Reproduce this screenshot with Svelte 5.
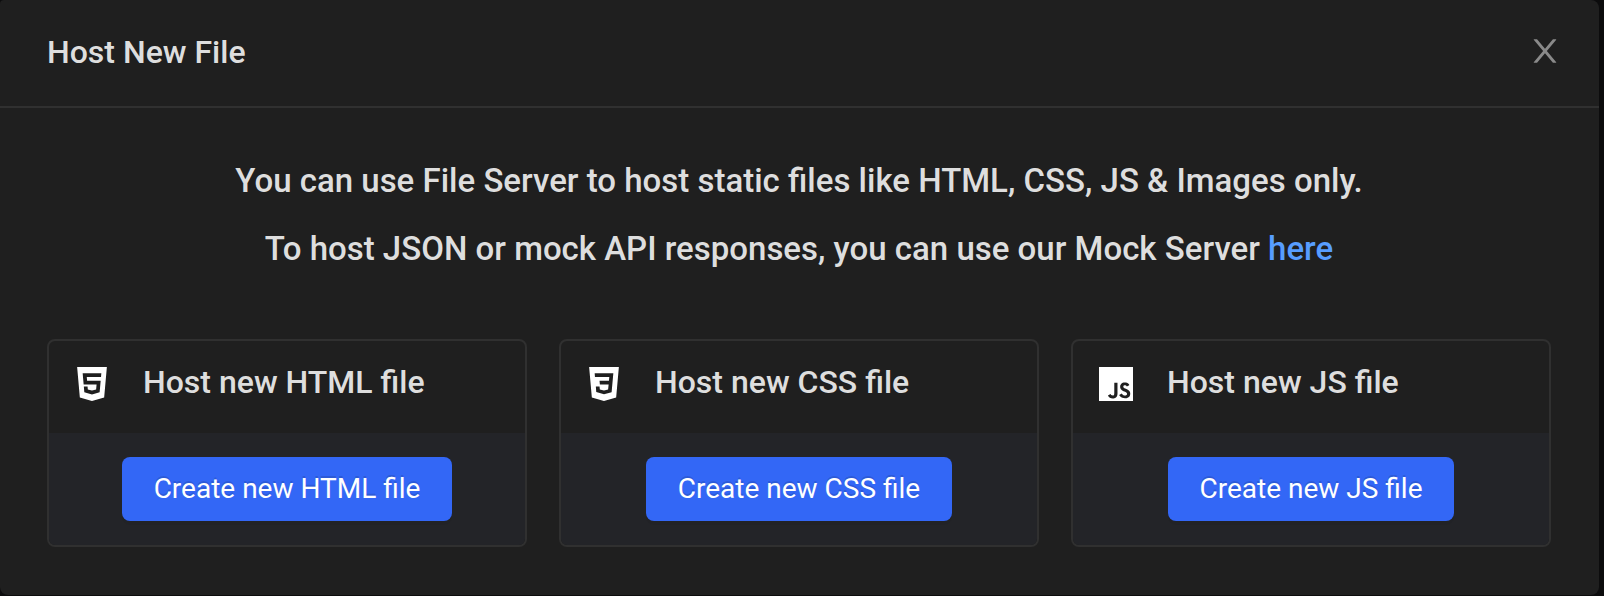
<script>
  const cards = [
    {
      type: 'HTML',
      icon: 'M1.5 0h21l-1.91 21.563L11.977 24l-8.564-2.438L1.5 0zm7.031 9.75l-.232-2.718 10.059.003.23-2.622L5.412 4.41l.698 8.01h9.126l-.326 3.426-2.91.804-2.955-.81-.188-2.11H6.248l.33 4.171L12 19.351l5.379-1.443.744-8.157H8.531z'
    },
    {
      type: 'CSS',
      icon: 'M1.5 0h21l-1.91 21.563L11.977 24l-8.565-2.438L1.5 0zm17.09 4.413L5.41 4.41l.213 2.622 10.125.002-.255 2.716h-6.64l.24 2.573h6.182l-.366 3.523-2.91.804-2.956-.81-.188-2.11h-2.61l.29 3.855L12 19.288l5.373-1.53L18.59 4.414z'
    },
    {
      type: 'JS',
      icon: 'M0 0h24v24H0V0zm22.034 18.276c-.175-1.095-.888-2.015-3.003-2.873-.736-.345-1.554-.585-1.797-1.14-.091-.33-.105-.51-.046-.705.15-.646.915-.84 1.515-.66.39.12.75.42.976.9 1.034-.676 1.034-.676 1.755-1.125-.27-.42-.404-.601-.586-.78-.63-.705-1.469-1.065-2.834-1.034l-.705.089c-.676.165-1.32.525-1.71 1.005-1.14 1.291-.811 3.541.569 4.471 1.365 1.02 3.361 1.244 3.616 2.205.24 1.17-.87 1.545-1.966 1.41-.811-.18-1.26-.586-1.755-1.336l-1.83 1.051c.21.48.45.689.81 1.109 1.74 1.756 6.09 1.666 6.871-1.004.029-.09.24-.705.074-1.65l.046.067zm-8.983-7.245h-2.248c0 1.938-.009 3.864-.009 5.805 0 1.232.063 2.363-.138 2.711-.33.689-1.18.601-1.566.48-.396-.196-.597-.466-.83-.855-.063-.105-.11-.196-.127-.196l-1.825 1.125c.305.63.75 1.172 1.324 1.517.855.51 2.004.675 3.207.405.783-.226 1.458-.691 1.811-1.411.51-.93.402-2.07.397-3.346.012-2.054 0-4.109 0-6.179l.004-.056z'
    }
  ];
</script>

<div class="modal" role="dialog" aria-labelledby="modal-title">
  <header class="modal-header">
    <h1 id="modal-title">Host New File</h1>
    <button class="close" type="button" aria-label="Close">
      <svg viewBox="64 64 896 896" width="32" height="32" fill="currentColor" aria-hidden="true">
        <path d="M563.8 512l262.5-312.9c4.4-5.2.7-13.1-6.1-13.1h-79.8c-4.7 0-9.2 2.1-12.3 5.7L511.6 449.8 295.1 191.7c-3-3.6-7.5-5.7-12.3-5.7H203c-6.8 0-10.5 7.9-6.1 13.1L459.4 512 196.9 824.9A7.95 7.95 0 00203 838h79.8c4.7 0 9.2-2.1 12.3-5.7l216.5-258.1 216.5 258.1c3 3.6 7.5 5.7 12.3 5.7h79.8c6.8 0 10.5-7.9 6.1-13.1L563.8 512z" />
      </svg>
    </button>
  </header>

  <main class="modal-body">
    <div class="intro">
      <p>You can use File Server to host static files like HTML, CSS, JS &amp; Images only.</p>
      <p>To host JSON or mock API responses, you can use our Mock Server <a href="#mock-server">here</a></p>
    </div>

    <div class="cards">
      {#each cards as card}
        <section class="card">
          <div class="card-header">
            <svg viewBox="0 0 24 24" width="34" height="34" fill="currentColor" aria-hidden="true">
              <path d={card.icon} />
            </svg>
            <h2>Host new {card.type} file</h2>
          </div>
          <div class="card-body">
            <button class="primary" type="button">Create new {card.type} file</button>
          </div>
        </section>
      {/each}
    </div>
  </main>
</div>

<style>
  :global(body) {
    margin: 0;
    background: #0c0c0d;
  }

  .modal {
    margin-right: 5px;
    border-radius: 4px 8px 8px 8px;
    background: #1f1f1f;
    color: #dedede;
    font-family: Roboto, sans-serif;
    font-size: 32px;
  }

  h1,
  h2,
  p {
    margin: 0;
    font-weight: 500;
  }

  h1,
  h2 {
    font-size: 32px;
  }

  .modal-header {
    display: flex;
    align-items: center;
    justify-content: space-between;
    padding: 29px 38px 33px 47px;
    border-bottom: 2px solid #303030;
  }

  h1 {
    padding-top: 2px;
    line-height: 42px;
  }

  .close {
    display: flex;
    padding: 0;
    border: 0;
    background: none;
    color: #8a8a8a;
    cursor: pointer;
  }

  .modal-body {
    padding: 47px 48px 48px 47px;
  }

  .intro {
    display: flex;
    flex-direction: column;
    gap: 16px;
    text-align: center;
  }

  .intro p {
    font-size: 33px;
    line-height: 52px;
  }

  a {
    color: #579dff;
    text-decoration: none;
  }

  .cards {
    display: grid;
    grid-template-columns: repeat(3, 1fr);
    gap: 32px;
    margin-top: 64px;
  }

  .card {
    overflow: hidden;
    border: 2px solid #303030;
    border-radius: 8px;
    background: #1f1f1f;
  }

  .card-header {
    display: flex;
    align-items: center;
    gap: 34px;
    padding: 19px 26px 25px;
    color: #ffffff;
  }

  h2 {
    padding-bottom: 4px;
    color: #dedede;
    line-height: 44px;
  }

  .card-body {
    display: flex;
    justify-content: center;
    padding: 24px;
    background: #232428;
  }

  .primary {
    height: 64px;
    padding: 0 32px;
    border: 0;
    border-radius: 8px;
    background: #3367f6;
    box-shadow: 0 4px 0 rgba(0, 0, 0, 0.04);
    color: #ffffff;
    font: 400 28px/44px Roboto, sans-serif;
    text-shadow: 0 -2px 0 rgba(0, 0, 0, 0.12);
    cursor: pointer;
  }
</style>
